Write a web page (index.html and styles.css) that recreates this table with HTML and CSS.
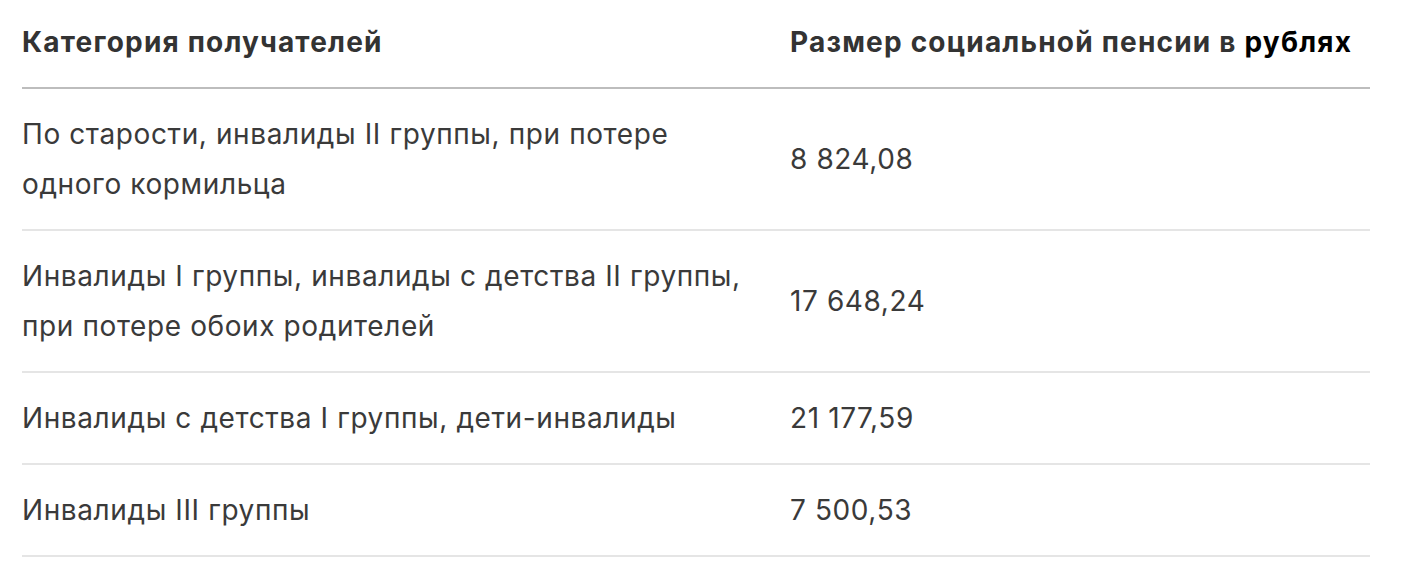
FILE: index.html
```html
<!DOCTYPE html>
<html lang="ru">
<head>
<meta charset="utf-8">
<title>Социальная пенсия</title>
<link rel="stylesheet" href="styles.css">
</head>
<body>
<table class="pension-table">
  <thead>
    <tr>
      <th class="col-cat">Категория получателей</th>
      <th class="col-sum">Размер социальной пенсии в <span class="accent">рублях</span></th>
    </tr>
  </thead>
  <tbody>
    <tr>
      <td>По старости, инвалиды II группы, при потере одного кормильца</td>
      <td>8 824,08</td>
    </tr>
    <tr>
      <td>Инвалиды I группы, инвалиды с детства II группы, при потере обоих родителей</td>
      <td>17 648,24</td>
    </tr>
    <tr>
      <td>Инвалиды с детства I группы, дети-инвалиды</td>
      <td>21 177,59</td>
    </tr>
    <tr>
      <td>Инвалиды III группы</td>
      <td>7 500,53</td>
    </tr>
  </tbody>
</table>
</body>
</html>
```

FILE: styles.css
```css
html, body {
  margin: 0;
  padding: 0;
  background: #ffffff;
}

body {
  font-family: Inter, "Noto Sans", "Liberation Sans", sans-serif;
  color: #3a3a3a;
  font-size: 28px;
  line-height: 50px;
}

.pension-table {
  margin: 0 0 0 22px;
  width: 1348px;
  border-collapse: collapse;
  table-layout: fixed;
}

.pension-table th,
.pension-table td {
  text-align: left;
  vertical-align: middle;
  padding: 20px 20px 20px 0;
}

.pension-table th:last-child,
.pension-table td:last-child {
  padding-right: 0;
}

.pension-table th {
  font-weight: 700;
  color: #333333;
  letter-spacing: 1.2px;
  padding-top: 17px;
  border-bottom: 2px solid #bdbdbd;
}

.pension-table td {
  font-weight: 400;
  letter-spacing: 0.6px;
  border-bottom: 2px solid #e5e5e5;
}

.col-cat {
  width: 748px;
}

.accent {
  color: #000000;
}
```
